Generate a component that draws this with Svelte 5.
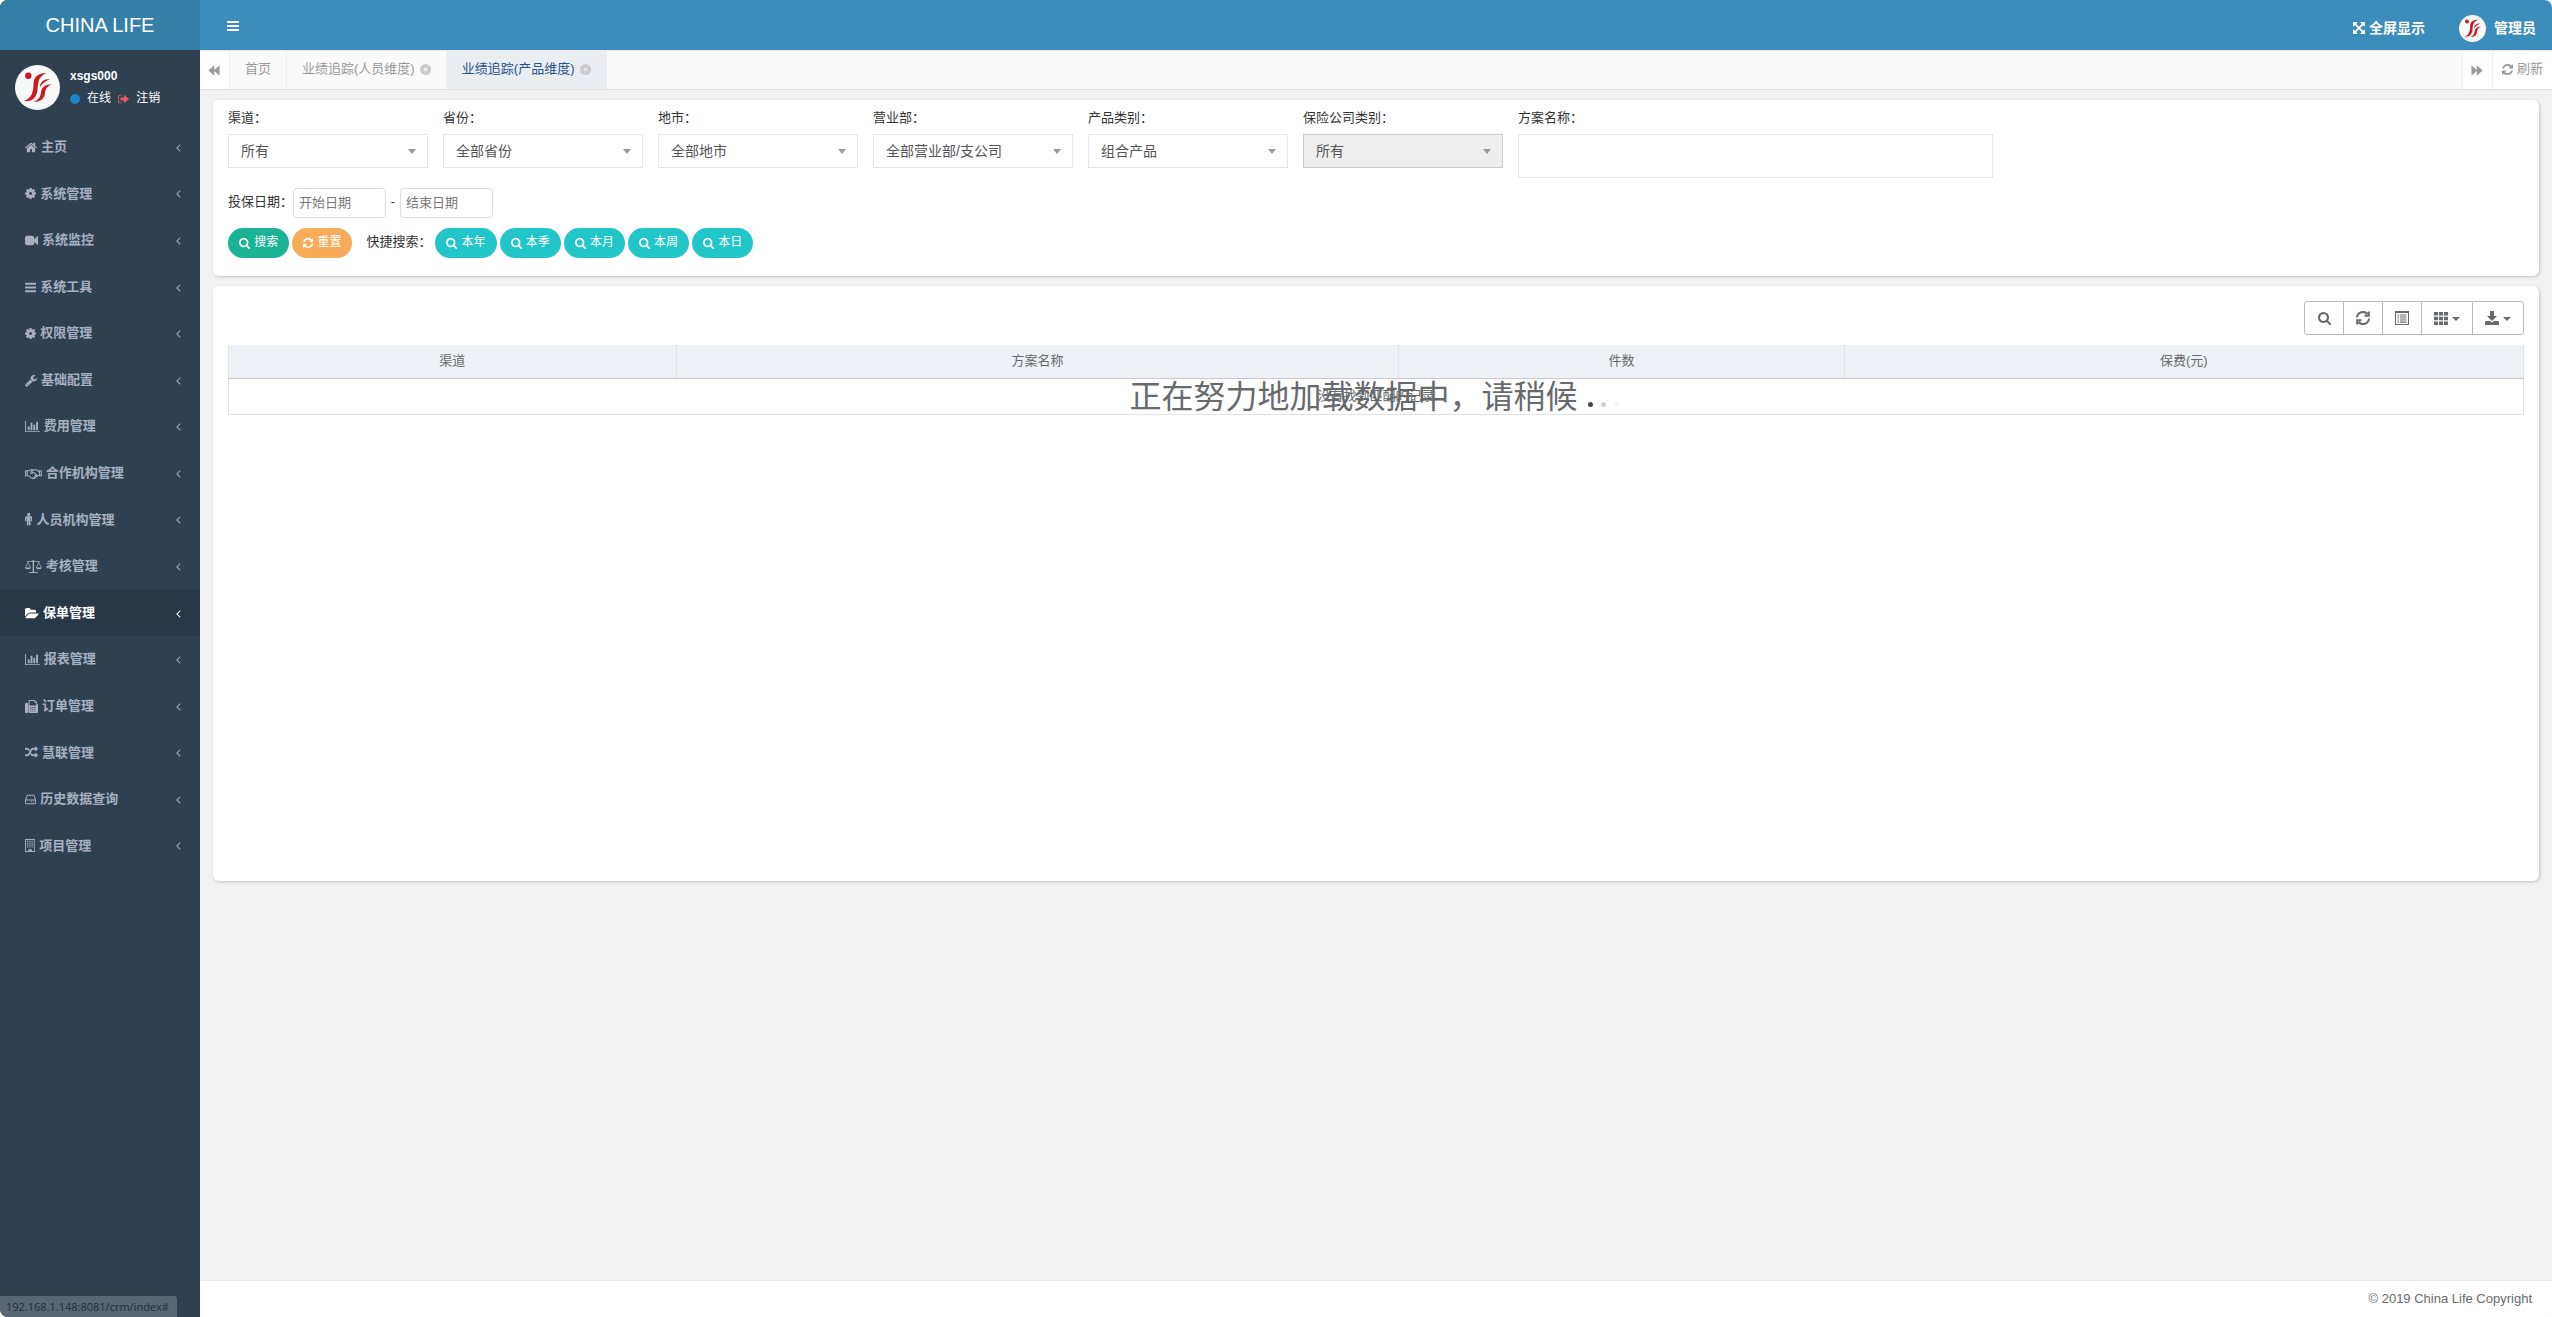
<script>
  const FA = {
    home: ["64 0 1664 1792", "M1472 992v480q0 26-19 45t-45 19h-384v-384h-256v384h-384q-26 0-45-19t-19-45v-480q0-1 .5-3t.5-3l575-474 575 474q1 2 1 6zm223-69l-62 74q-8 9-21 11h-3q-13 0-21-7l-692-577-692 577q-12 8-24 7-13-2-21-11l-62-74q-8-10-7-23.5t11-21.5l719-599q32-26 76-26t76 26l244 204v-195q0-14 9-23t23-9h192q14 0 23 9t9 23v408l219 182q10 8 11 21.5t-7 23.5z"],
    cog: ["128 0 1536 1792", "M1112 896q0-89-63-152t-153-63-153 63-63 152 63 152 153 63 153-63 63-152zm552-109v222q0 12-8 23t-20 13l-185 28q-19 54-39 91 35 50 107 138 10 12 10 25t-9 23q-27 37-99 108t-94 71q-12 0-26-9l-138-108q-44 23-91 38-16 136-29 186-7 28-36 28h-222q-14 0-24.5-8.5t-11.5-21.5l-28-184q-49-16-90-37l-141 107q-10 9-25 9-14 0-25-11-126-114-165-168-7-10-7-23 0-12 8-23 15-21 51-66.5t54-70.5q-27-50-41-99l-183-27q-13-2-21-12.5t-8-23.5v-222q0-12 8-23t19-13l186-28q14-46 39-92-40-57-107-138-10-12-10-24 0-10 9-23 26-36 98.5-107.5t94.5-71.5q13 0 26 10l138 107q44-23 91-38 16-136 29-186 7-28 36-28h222q14 0 24.5 8.5t11.5 21.5l28 184q49 16 90 37l142-107q9-9 24-9 13 0 25 10 129 119 165 170 7 8 7 22 0 12-8 23-15 21-51 66.5t-54 70.5q26 50 41 98l183 28q13 2 21 12.5t8 23.5z"],
    video: ["0 0 1792 1792", "M1792 352v1088q0 42-39 59-13 5-25 5-27 0-45-19l-403-403v166q0 119-84.5 203.5t-203.5 84.5h-704q-119 0-203.5-84.5t-84.5-203.500v-704q0-119 84.5-203.5t203.5-84.5h704q119 0 203.5 84.5t84.5 203.5v165l403-402q18-19 45-19 12 0 25 5 39 17 39 59z"],
    bars: ["128 0 1536 1792", "M1664 1344v128q0 26-19 45t-45 19h-1408q-26 0-45-19t-19-45v-128q0-26 19-45t45-19h1408q26 0 45 19t19 45zm0-512v128q0 26-19 45t-45 19h-1408q-26 0-45-19t-19-45v-128q0-26 19-45t45-19h1408q26 0 45 19t19 45zm0-512v128q0 26-19 45t-45 19h-1408q-26 0-45-19t-19-45v-128q0-26 19-45t45-19h1408q26 0 45 19t19 45z"],
    wrench: ["64 0 1664 1792", "M448 1472q0-26-19-45t-45-19-45 19-19 45 19 45 45 19 45-19 19-45zm644-420l-682 682q-37 37-90 37-52 0-91-37l-106-108q-38-36-38-90 0-53 38-91l681-681q39 98 114.5 173.5t173.5 114.5zm634-435q0 39-23 106-47 134-164.5 217.5t-258.5 83.5q-185 0-316.5-131.5t-131.5-316.5 131.5-316.5 316.5-131.5q58 0 121.5 16.5t107.5 46.5q16 11 16 28t-16 28l-293 169v224l193 107q5-3 79-48.5t135.5-81 70.5-35.5q15 0 23.5 10t8.5 25z"],
    chart: ["0 0 2048 1792", "M640 896v512h-256v-512h256zm384-512v1024h-256v-1024h256zm1024 1152v128h-2048v-1536h128v1408h1920zm-640-896v768h-256v-768h256zm384-384v1152h-256v-1152h256z"],
    handshake: ["0 0 2304 1792", "M60 520h250v680H60zM2244 520h-250v680h250zM310 520h200q60 0 130-60t180-60h300M310 1200h190l390 340q130 90 270 20 170 20 230-90 130 0 180-140 130-20 100-150l-500-460-170 130q-100 60-180-20-60-90 20-170l290-230q70-50 150-50h240q80 0 130 50l150 140h194M1994 1180h-330M1160 1560l-110-110M1390 1470l-170-180M1570 1330l-200-210", true],
    male: ["0 0 1024 1792", "M1024 640v416q0 40-28 68t-68 28-68-28-28-68v-352h-64v912q0 46-33 79t-79 33-79-33-33-79v-464h-64v464q0 46-33 79t-79 33-79-33-33-79v-912h-64v352q0 40-28 68t-68 28-68-28-28-68v-416q0-80 56-136t136-56h640q80 0 136 56t56 136zm-288-448q0 93-65.500 158.500t-158.500 65.500-158.500-65.500-65.500-158.500 65.500-158.500 158.500-65.500 158.500 65.500 65.500 158.500z"],
    balance: ["0 0 2304 1792", "M1056 0h192v128h768v128h-100l368 768q0 256-384 256t-384-256l368-768h-636v1408h500v128H556v-128h500V256H420l368 768q0 256-384 256T20 1024l368-768H288V128h768zM404 428L120 1024h568zm1496 0l-284 596h568z"],
    folder: ["0 0 1920 1792", "M1879 952q0 31-31 66l-336 396q-43 51-120.5 86.5t-143.5 35.5h-1088q-34 0-60.5-13t-26.5-43q0-31 31-66l336-396q43-51 120.5-86.5t143.5-35.5h1088q34 0 60.5 13t26.5 43zm-343-344v160h-832q-94 0-197 47.5t-164 119.5l-337 396-5 6q0-4-.5-12.5t-.5-12.5v-960q0-92 66-158t158-66h320q92 0 158 66t66 158v32h544q92 0 158 66t66 158z"],
    fax: ["0 0 1792 1792", "M160 384h130q66 0 113 47t47 113v1088q0 66-47 113t-113 47H160q-66 0-113-47T0 1632V544q0-66 47-113t113-47zm1504 144q128 48 128 176v928q0 66-47 113t-113 47H656q-66 0-113-47t-47-113V96q0-40 28-68t68-28h672q40 0 88 20t76 48l152 152q28 28 48 76t20 88zM640 128v640h896V384h-192q-40 0-40-40V128zm96 830v130h140V958zm272 0v130h140V958zm272 0v130h140V958zm-544 256v130h140v-130zm272 0v130h140v-130zm272 0v130h140v-130zm-544 256v130h140v-130zm272 0v130h140v-130zm272 0v130h140v-130z"],
    random: ["0 0 1792 1792", "M666 481q-60 92-137 273-22-45-37-72.5t-40.5-63.5-51-56.5-63-35-81.5-14.5h-224q-14 0-23-9t-9-23v-192q0-14 9-23t23-9h224q250 0 410 225zm1126 799q0 14-9 23l-320 320q-9 9-23 9-13 0-22.5-9.5t-9.5-22.500v-192q-32 0-85 .5t-81 1-73-1-71-5-64-10.5-63-18.5-58-28.5-59-40-55-53.5-56-69.5q59-93 136-273 22 45 37 72.5t40.5 63.5 51 56.5 63 35 81.5 14.500h256v-192q0-14 9-23t23-9q12 0 24 10l319 319q9 9 9 23zm0-896q0 14-9 23l-320 320q-9 9-23 9-13 0-22.5-9.5t-9.5-22.500v-192h-256q-48 0-87 15t-69 45-51 61.5-45 77.5q-32 62-78 171-29 66-49.5 111t-54 105-64 100-74 83-90 68.5-106.5 42-128 16.500h-224q-14 0-23-9t-9-23v-192q0-14 9-23t23-9h224q48 0 87-15t69-45 51-61.5 45-77.5q32-62 78-171 29-66 49.5-111t54-105 64-100 74-83 90-68.5 106.5-42 128-16.500h256v-192q0-14 9-23t23-9q12 0 24 10l319 319q9 9 9 23z"],
    hdd: ["128 0 1536 1792", "M128 1056q0-40 14-80l197-606q16-50 60-82t97-32h800q53 0 97 32t60 82l197 606q14 40 14 80v320q0 66-47 113t-113 47H288q-66 0-113-47t-47-113zm128 0v320q0 32 32 32h1216q32 0 32-32v-320q0-32-32-32H288q-32 0-32 32zm48-160h1184L1335 416q-10-32-39-32H496q-29 0-39 32zM960 1136h130v130H960zm260 0h130v130h-130z"],
    building: ["192 0 1408 1792", "M192 0h1408v1792H192zm128 128v1536h320v-256h512v256h320V128zM448 256h150v150H448zm248 0h150v150H696zm248 0h150v150H944zm248 0h150v150h-150zM448 512h150v150H448zm248 0h150v150H696zm248 0h150v150H944zm248 0h150v150h-150zM448 768h150v150H448zm248 0h150v150H696zm248 0h150v150H944zm248 0h150v150h-150zM448 1024h150v150H448zm248 0h150v150H696zm248 0h150v150H944zm248 0h150v150h-150z"],
    search: ["64 0 1664 1792", "M1216 832q0-185-131.5-316.5t-316.5-131.5-316.5 131.5-131.5 316.5 131.5 316.5 316.5 131.5 316.5-131.5 131.5-316.500zm512 832q0 52-38 90t-90 38q-54 0-90-38l-343-342q-179 124-399 124-143 0-273.5-55.5t-225-150-150-225-55.5-273.5 55.5-273.5 150-225 225-150 273.5-55.5 273.5 55.5 225 150 150 225 55.5 273.5q0 220-124 399l343 343q37 37 37 90z"],
    refresh: ["128 0 1536 1792", "M1639 1056q0 5-1 7-64 268-268 434.5t-478 166.5q-146 0-282.5-55t-243.5-157l-129 129q-19 19-45 19t-45-19-19-45v-448q0-26 19-45t45-19h448q26 0 45 19t19 45-19 45l-137 137q71 66 161 102t187 36q134 0 250-65t186-179q11-17 53-117 8-23 30-23h192q13 0 22.5 9.5t9.5 22.5zm25-800v448q0 26-19 45t-45 19h-448q-26 0-45-19t-19-45 19-45l138-138q-148-137-349-137-134 0-250 65t-186 179q-11 17-53 117-8 23-30 23h-199q-13 0-22.5-9.5t-9.5-22.500v-7q65-268 270-434.5t480-166.5q146 0 284 55.5t245 156.500l130-129q19-19 45-19t45 19 19 45z"],
    sync: ["0 0 14 14", "M1 6.500A6 6 0 0 1 11.500 3M13 7.500A6 6 0 0 1 2.500 11M12.800 .5v4.300H8.500M1.200 13.500V9.200h4.300"],
    expand: ["128 0 1536 1792", "M1411 541l-355 355 355 355 144-144q29-31 70-14 39 17 39 59v448q0 26-19 45t-45 19h-448q-42 0-59-40-17-39 14-69l144-144-355-355-355 355 144 144q31 30 14 69-17 40-59 40h-448q-26 0-45-19t-19-45v-448q0-42 40-59 39-17 69 14l144 144 355-355-355-355-144 144q-19 19-45 19-12 0-24-5-40-17-40-59v-448q0-26 19-45t45-19h448q42 0 59 40 17 39-14 69l-144 144 355 355 355-355-144-144q-31-30-14-69 17-40 59-40h448q26 0 45 19t19 45v448q0 42-39 59-13 5-25 5-26 0-45-19z"],
    angle: ["0 0 640 1792", "M627 544q0 13-10 23L224 960l393 393q10 10 10 23t-10 23l-50 50q-10 10-23 10t-23-10L55 983q-10-10-10-23t10-23l466-466q10-10 23-10t23 10l50 50q10 10 10 23z"],
    backward: ["64 0 1664 1792", "M1664 160v1472L930 960v672L128 896l802-736v672z"],
    forward: ["64 0 1664 1792", "M128 160v1472l734-672v672l802-736-802-736v672z"],
    close: ["128 0 1536 1792", "M1664 896a768 768 0 1 1-1536 0 768 768 0 0 1 1536 0zM1077 624L896 805 715 624l-91 91 181 181-181 181 91 91 181-181 181 181 91-91-181-181 181-181z"],
    signout: ["64 0 1664 1792", "M640 1408v128H352q-119 0-203-84t-84-204V544q0-119 84-203t203-85h288v128H352q-66 0-113 47t-47 113v704q0 66 47 113t113 47zM960 352q20-52 80-20l640 530q34 34 0 68l-640 540q-60 30-80-20v-320H496q-48 0-48-48V706q0-48 48-48h464z"],
    list: ["0 0 14 14", "M0 0h14v14H0zM1 2v11h12V2zM2.500 3.500h1.500v1H2.500zm2.500 0h6.500v1H5zM2.500 5.500h1.500v1H2.500zm2.500 0h6.500v1H5zM2.500 7.500h1.500v1H2.500zm2.500 0h6.500v1H5zM2.500 9.500h1.500v1H2.500zm2.500 0h6.500v1H5zM2.500 11.300h1.500v.7H2.500zm2.500 0h6.500v.7H5z"],
    grid: ["0 0 14 14", "M0 1h4v3.500H0zm5 0h4v3.500H5zm5 0h4v3.500h-4zM0 5.700h4v3.500H0zm5 0h4v3.500H5zm5 0h4v3.500h-4zM0 10.400h4V14H0zm5 0h4V14H5zm5 0h4V14h-4z"],
    download: ["0 0 14 14", "M5 0h4v5h3L7 10 2 5h3zM1 10h4l2 1.500L9 10h4l1 1v3H0v-3z"],
  };

  const menu = [
    { icon: "home", text: "主页" },
    { icon: "cog", text: "系统管理" },
    { icon: "video", text: "系统监控" },
    { icon: "bars", text: "系统工具" },
    { icon: "cog", text: "权限管理" },
    { icon: "wrench", text: "基础配置" },
    { icon: "chart", text: "费用管理" },
    { icon: "handshake", text: "合作机构管理" },
    { icon: "male", text: "人员机构管理" },
    { icon: "balance", text: "考核管理" },
    { icon: "folder", text: "保单管理" },
    { icon: "chart", text: "报表管理" },
    { icon: "fax", text: "订单管理" },
    { icon: "random", text: "慧联管理" },
    { icon: "hdd", text: "历史数据查询" },
    { icon: "building", text: "项目管理" },
  ];
  let activeMenu = $state("保单管理");

  const tabs = [
    { text: "首页", closable: false },
    { text: "业绩追踪(人员维度)", closable: true },
    { text: "业绩追踪(产品维度)", closable: true },
  ];
  let activeTab = $state(2);

  const filters = [
    { id: "channel", label: "渠道：", value: "所有" },
    { id: "province", label: "省份：", value: "全部省份" },
    { id: "city", label: "地市：", value: "全部地市" },
    { id: "dept", label: "营业部：", value: "全部营业部/支公司" },
    { id: "product", label: "产品类别：", value: "组合产品" },
    { id: "company", label: "保险公司类别：", value: "所有", disabled: true },
  ];
  const quick = ["本年", "本季", "本月", "本周", "本日"];
  const columns = ["渠道", "方案名称", "件数", "保费(元)"];
  const tools = [
    { icon: "search", label: "搜索" },
    { icon: "sync", label: "刷新" },
    { icon: "list", label: "切换" },
    { icon: "grid", label: "列", drop: true },
    { icon: "download", label: "导出", drop: true },
  ];

  let planName = $state("");
  let startDate = $state("");
  let endDate = $state("");

  function reset() {
    planName = "";
    startDate = "";
    endDate = "";
  }
</script>

{#snippet icon(name)}
  <svg class="fa" class:outline={FA[name][2]} class:sync={name === "sync"} viewBox={FA[name][0]} aria-hidden="true">
    <path fill-rule="evenodd" d={FA[name][1]} />
  </svg>
{/snippet}

{#snippet avatar()}
  <svg class="avatar" viewBox="0 0 45 45" aria-hidden="true">
    <circle cx="22.500" cy="22.500" r="22.500" fill="#f8faf9" />
    <g fill="#cb1a20">
      <circle cx="13.300" cy="10.800" r="3.200" />
      <path d="M31.500 8C23 8 18.500 12 18.500 19c0 8-2 14-9.500 17 8 1 12.500-3 13.500-11 .6-8 .5-13 9-17z" />
      <path d="M35 14c-6.500 0-10 3-10 8.500 2-3.500 4.500-5.500 10-8.500z" />
      <path d="M36.500 19.500c-6.500 0-10 2.500-10.500 8-.5 4.500-2.500 7.500-7.500 9.500 7.500 0 11-3.500 11.500-9 .4-4 2-6.500 6.500-8.500z" />
    </g>
  </svg>
{/snippet}

<div class="wrapper">
  <aside class="sidebar">
    <a class="logo" href="#index">CHINA LIFE</a>
    <div class="user-panel">
      {@render avatar()}
      <div class="info">
        <p>xsgs000</p>
        <div class="links">
          <a href="#online"><span class="online"></span>在线</a>
          <a href="#logout"><span class="out">{@render icon("signout")}</span>注销</a>
        </div>
      </div>
    </div>
    <nav>
      {#each menu as item}
        <a href="#menu" class="menu-item" class:active={activeMenu === item.text} onclick={() => (activeMenu = item.text)}>
          {@render icon(item.icon)}
          <span>{item.text}</span>
          <span class="arrow">{@render icon("angle")}</span>
        </a>
      {/each}
    </nav>
  </aside>

  <div class="main">
    <header class="navbar">
      <button class="toggle" aria-label="菜单">{@render icon("bars")}</button>
      <div class="nav-right">
        <a href="#full">{@render icon("expand")}全屏显示</a>
        <a href="#profile" class="profile">{@render avatar()}管理员</a>
      </div>
    </header>

    <div class="tabs">
      <button class="roll left" aria-label="向左">{@render icon("backward")}</button>
      <div class="tab-list">
        {#each tabs as tab, i}
          <a href="#tab" class="tab" class:active={activeTab === i} onclick={() => (activeTab = i)}>
            {tab.text}
            {#if tab.closable}<span class="close">{@render icon("close")}</span>{/if}
          </a>
        {/each}
      </div>
      <button class="roll right" aria-label="向右">{@render icon("forward")}</button>
      <button class="roll reload">{@render icon("refresh")}刷新</button>
    </div>

    <main class="content">
      <section class="panel search">
        <div class="fields">
          {#each filters as f}
            <div class="field">
              <label for={f.id}>{f.label}</label>
              <div class="select">
                <select id={f.id} disabled={f.disabled}>
                  <option>{f.value}</option>
                </select>
              </div>
            </div>
          {/each}
          <div class="field plan">
            <label for="plan">方案名称：</label>
            <input id="plan" type="text" bind:value={planName} />
          </div>
        </div>
        <div class="dates">
          <label for="start">投保日期：</label>
          <input id="start" type="text" placeholder="开始日期" bind:value={startDate} />
          <span class="dash">-</span>
          <input type="text" placeholder="结束日期" aria-label="结束日期" bind:value={endDate} />
        </div>
        <div class="buttons">
          <button class="btn primary">{@render icon("search")}搜索</button>
          <button class="btn warning" onclick={reset}>{@render icon("refresh")}重置</button>
          <span class="quick-label">快捷搜索：</span>
          {#each quick as q}
            <button class="btn info-btn">{@render icon("search")}{q}</button>
          {/each}
        </div>
      </section>

      <section class="panel result">
        <div class="toolbar">
          {#each tools as t}
            <button aria-label={t.label}>
              <span class="tool-icon">{@render icon(t.icon)}</span>
              {#if t.drop}<span class="caret"></span>{/if}
            </button>
          {/each}
        </div>
        <div class="table-box">
          <table>
            <thead>
              <tr>
                {#each columns as col}
                  <th>{col}</th>
                {/each}
              </tr>
            </thead>
            <tbody>
              <tr><td colspan="4">没有找到匹配的记录</td></tr>
            </tbody>
          </table>
          <div class="loading">
            正在努力地加载数据中，请稍候
            <span class="dots"><i></i><i></i><i></i></span>
          </div>
        </div>
      </section>
    </main>

    <footer>© 2019 China Life Copyright</footer>
  </div>

  <div class="status">192.168.1.148:8081/crm/index#</div>
</div>

<style>
  :global(body) {
    background: #fff;
  }

  .wrapper {
    position: relative;
    display: flex;
    min-height: 100vh;
    font-family: "Liberation Sans", "Noto Sans CJK SC", sans-serif;
    font-size: 13px;
    line-height: 1.43;
    color: #676a6c;
    background: #f2f2f2;
    border-radius: 8px;
    overflow: hidden;
  }

  .wrapper *,
  .wrapper *::after {
    box-sizing: border-box;
  }

  a {
    color: inherit;
    text-decoration: none;
  }

  button,
  input,
  select {
    font: inherit;
    color: inherit;
    margin: 0;
  }

  .fa {
    height: 1em;
    width: auto;
    flex: none;
    display: block;
    fill: currentColor;
  }

  .fa.outline {
    fill: none;
    stroke: currentColor;
    stroke-width: 150;
  }

  .fa.sync {
    fill: none;
    stroke: currentColor;
    stroke-width: 2;
  }

  .avatar {
    flex: none;
    display: block;
  }

  .sidebar {
    width: 200px;
    flex: none;
    background: #2f4050;
  }

  .logo {
    display: block;
    height: 50px;
    line-height: 50px;
    font-size: 20px;
    text-align: center;
    color: #fff;
    background: #367fa9;
  }

  .user-panel {
    display: flex;
    gap: 10px;
    height: 74px;
    padding: 15px;
    color: #fff;
    font-size: 12px;
  }

  .user-panel .avatar {
    width: 45px;
    height: 45px;
  }

  .info p {
    margin: 3px 0 5px;
    font-weight: 700;
  }

  .links,
  .links a {
    display: flex;
    align-items: center;
    gap: 7px;
  }

  .online {
    width: 10px;
    height: 10px;
    border-radius: 50%;
    background: #1c84c6;
  }

  .out {
    color: #ed5565;
  }

  .menu-item {
    display: flex;
    align-items: center;
    gap: 4px;
    padding: 14px 19px 14px 25px;
    font-weight: 600;
    color: #a7b1c2;
  }

  .menu-item.active {
    color: #fff;
    background: #293846;
  }

  .arrow {
    margin-left: auto;
  }

  .main {
    flex: 1;
    min-width: 0;
    display: flex;
    flex-direction: column;
  }

  .navbar {
    display: flex;
    align-items: center;
    justify-content: space-between;
    height: 50px;
    padding: 0 16px 0 27px;
    color: #fff;
    font-size: 14px;
    background: #3c8dbc;
  }

  .toggle {
    padding: 2px 0 0;
    border: 0;
    background: none;
  }

  .nav-right {
    display: flex;
    gap: 34px;
    padding-top: 6px;
    font-weight: 700;
  }

  .nav-right a {
    display: flex;
    align-items: center;
    gap: 4px;
  }

  .nav-right .profile {
    gap: 8px;
  }

  .profile .avatar {
    width: 27px;
    height: 27px;
  }

  .tabs {
    display: flex;
    height: 40px;
    color: #999;
    background: #fafafa;
    border-top: 1px solid #e7eaec;
    border-bottom: 1px solid #e0e0e0;
  }

  .tab-list {
    flex: 1;
    display: flex;
  }

  .tab {
    display: flex;
    align-items: center;
    gap: 5px;
    padding: 0 15px 2px;
    border-right: 1px solid #eee;
  }

  .tab.active {
    color: #23508e;
    background: #eaedf1;
  }

  .close {
    color: #ccc;
  }

  .roll {
    display: flex;
    align-items: center;
    justify-content: center;
    gap: 4px;
    width: 30px;
    padding: 0;
    border: 0;
    background: #fff;
  }

  .roll.left {
    border-right: 1px solid #eee;
  }

  .roll.right,
  .roll.reload {
    border-left: 1px solid #eee;
  }

  .roll.reload {
    width: 60px;
    padding-bottom: 2px;
  }

  .content {
    display: flex;
    flex-direction: column;
    gap: 10px;
    padding: 10px 13px;
  }

  .panel {
    background: #fff;
    border-radius: 6px;
    box-shadow: 1px 1px 3px rgba(0, 0, 0, 0.2);
  }

  .search {
    padding: 9px 15px 18px;
    color: #333;
  }

  .fields {
    display: flex;
    gap: 15px;
  }

  .field {
    width: 200px;
  }

  .field label {
    display: block;
    margin-bottom: 6px;
  }

  .plan {
    width: 475px;
  }

  .plan input {
    display: block;
    width: 100%;
    height: 44px;
    padding: 6px 12px;
    border: 1px solid #e5e6e7;
    background: #fff;
  }

  .select {
    position: relative;
  }

  .select::after {
    content: "";
    position: absolute;
    top: 15px;
    right: 12px;
    border: 4px solid transparent;
    border-top: 5px solid #999;
    border-bottom: 0;
    pointer-events: none;
  }

  select {
    display: block;
    width: 100%;
    height: 34px;
    padding: 0 12px;
    font-size: 14px;
    color: #555;
    border: 1px solid #e5e6e7;
    border-radius: 0;
    background: #fff;
    appearance: none;
  }

  select:disabled {
    color: #555;
    background: #eee;
    border-color: #ccc;
    opacity: 1;
  }

  .dates {
    display: flex;
    align-items: center;
    margin-top: 10px;
  }

  .dates input {
    width: 93px;
    height: 30px;
    padding: 0 5px;
    border: 1px solid #ddd;
    border-radius: 4px;
    background: #fff;
  }

  .dates input::placeholder {
    color: #777;
  }

  .dash {
    width: 14px;
    text-align: center;
  }

  .buttons {
    display: flex;
    align-items: center;
    gap: 3px;
    margin-top: 10px;
  }

  .btn {
    display: flex;
    align-items: center;
    gap: 4px;
    height: 30px;
    padding: 0 11px;
    font-size: 12px;
    color: #fff;
    border: 0;
    border-radius: 15px;
  }

  .primary {
    background: #1ab394;
  }

  .warning {
    background: #f8ac59;
  }

  .info-btn {
    background: #23c6c8;
  }

  .quick-label {
    margin: 0 1px 0 11px;
  }

  .result {
    min-height: 595px;
    padding: 15px;
  }

  .toolbar {
    display: flex;
    justify-content: flex-end;
    margin-bottom: 10px;
  }

  .toolbar button {
    display: flex;
    align-items: center;
    gap: 4px;
    height: 34px;
    padding: 0 12px;
    margin-left: -1px;
    font-size: 14px;
    border: 1px solid #bbb;
    background: #fff;
  }

  .tool-icon {
    display: flex;
    justify-content: center;
    width: 14px;
  }

  .toolbar button:first-child {
    border-radius: 3px 0 0 3px;
  }

  .toolbar button:last-child {
    border-radius: 0 3px 3px 0;
  }

  .caret {
    margin-top: 2px;
    border: 4px solid transparent;
    border-top-color: currentColor;
    border-bottom: 0;
  }

  .table-box {
    position: relative;
  }

  table {
    width: 100%;
    table-layout: fixed;
    border-collapse: collapse;
  }

  th,
  td {
    height: 34px;
    padding: 0;
    font-weight: 400;
    text-align: center;
    border: 1px solid #e0e4e7;
  }

  th {
    background: #eef1f6;
    border-top: 0;
    border-bottom-color: #c8cacc;
  }

  td {
    height: 36px;
  }

  th:nth-child(1) {
    width: 19.5%;
  }

  th:nth-child(2) {
    width: 31.5%;
  }

  th:nth-child(3) {
    width: 19.4%;
  }

  .loading {
    position: absolute;
    left: 0;
    right: 0;
    bottom: 0;
    height: 36px;
    display: flex;
    align-items: center;
    justify-content: center;
    font-size: 32px;
    line-height: 36px;
  }

  .dots {
    display: flex;
    gap: 8px;
    margin: 14px 4px 0 10px;
  }

  .dots i {
    width: 5px;
    height: 5px;
    border-radius: 50%;
    background: #46484a;
  }

  .dots i:nth-child(2) {
    background: #d0d0d0;
  }

  .dots i:nth-child(3) {
    background: #f5f5f5;
  }

  footer {
    height: 37px;
    margin-top: auto;
    padding: 0 20px;
    line-height: 36px;
    text-align: right;
    background: #fff;
    border-top: 1px solid #e7eaec;
  }

  /* link target hint in the window corner */
  .status {
    position: absolute;
    left: 0;
    bottom: 0;
    height: 21px;
    padding: 0 8px 0 6px;
    font-family: "Open Sans", "Noto Sans", sans-serif;
    font-size: 11px;
    line-height: 21px;
    color: #222d38;
    background: #5a6671;
    border-top-right-radius: 3px;
  }
</style>
